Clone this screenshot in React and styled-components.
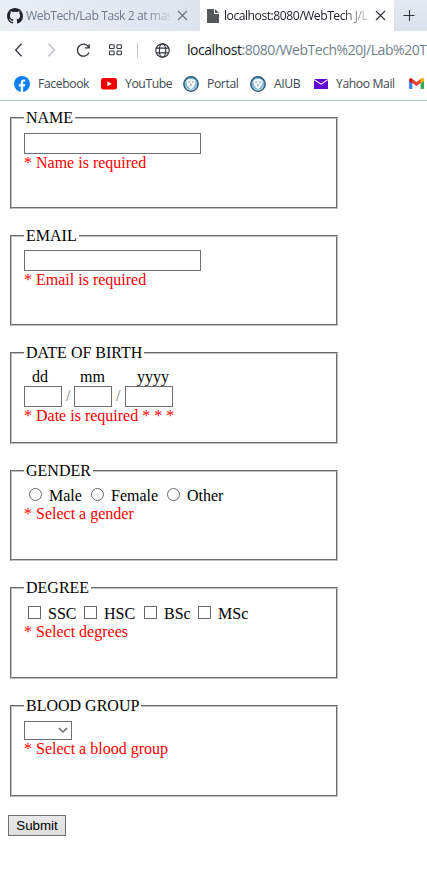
import React from "react";
import styled, { createGlobalStyle } from "styled-components";

const GlobalStyle = createGlobalStyle`
  * { box-sizing: border-box; }
  html, body { margin: 0; background: #fff; overflow: hidden; }
`;

const Window = styled.div`
  width: 427px;
  height: 883px;
  overflow: hidden;
  background: #fff;
  font-family: "Open Sans", "Noto Sans", sans-serif;
`;

const TabStrip = styled.div`
  display: flex;
  height: 31px;
  background: linear-gradient(#e3eaf3, #d9e1eb);
`;

const Tab = styled.div`
  display: flex;
  align-items: center;
  flex: none;
  width: ${(p) => p.$width}px;
  height: 31px;
  padding-left: 7px;
  background: ${(p) => (p.$active ? "#fff" : "linear-gradient(90deg, #e9eef5, #dce4ee)")};
  color: ${(p) => (p.$active ? "#20242c" : "#6c7b8d")};
  svg { flex: none; }
`;

const TabTitle = styled.div`
  width: ${(p) => p.$width}px;
  margin-left: ${(p) => p.$gap}px;
  margin-right: 7px;
  white-space: nowrap;
  font-size: 12.2px;
  line-height: 20px;
  letter-spacing: ${(p) => p.$spacing}px;
  mask-image: linear-gradient(90deg, #000 82%, transparent 104%);
`;

const NewTab = styled.div`
  display: flex;
  align-items: center;
  padding: 0 0 1px 9px;
`;

const AddressBar = styled.div`
  display: flex;
  align-items: center;
  height: 38px;
  padding-left: 12px;
  svg { flex: none; }
`;

const Divider = styled.div`
  flex: none;
  width: 1px;
  height: 15px;
  margin: 0 17px 0 15px;
  background: #c4c9cf;
`;

const Url = styled.div`
  margin-left: 17px;
  white-space: nowrap;
  font-size: 14px;
  line-height: 22px;
  letter-spacing: -0.46px;
  color: #74808e;
  span { color: #15181d; }
`;

const Bookmarks = styled.div`
  display: flex;
  align-items: center;
  height: 32px;
  border-bottom: 1px solid #b1bfcb;
  padding: 0 0 2px 14px;
`;

const Bookmark = styled.div`
  display: flex;
  align-items: center;
  flex: none;
  width: ${(p) => p.$width}px;
  white-space: nowrap;
  font-size: 12.2px;
  line-height: 20px;
  letter-spacing: -0.4px;
  color: #414852;
  svg { flex: none; margin-right: 8px; }
`;

const Form = styled.form`
  display: flex;
  flex-direction: column;
  align-items: flex-start;
  padding: 8px 0 0 8px;
  font: 16px/18px "Liberation Serif", "Times New Roman", serif;
  color: #000;
`;

const Group = styled.fieldset`
  width: 328px;
  height: ${(p) => p.$height}px;
  margin: 0 0 18px 2px;
  padding: 0 12px;
  border: 2px groove #c0c0c0;
`;

const Legend = styled.legend`
  height: 18px;
  padding: 0 2px;
  white-space: nowrap;
`;

const Row = styled.div`
  display: flex;
  align-items: flex-end;
  height: ${(p) => p.$height}px;
`;

const TextInput = styled.input`
  width: ${(p) => p.$width}px;
  height: 21px;
  margin: 0;
  padding: 1px 2px;
  border: 1px solid #6f6f6f;
  border-radius: 0;
  background: #fff;
`;

const ErrorText = styled.div`
  white-space: nowrap;
  color: #ff0000;
`;

const DateLabels = styled.div`
  display: grid;
  grid-template-columns: 48px 57px 48px;
  height: 18px;
  margin: 6px 0 0 8px;
`;

const Slash = styled.span`
  width: ${(p) => p.$width}px;
  height: 21px;
  padding: 1px 0 0 4px;
  color: #777;
`;

const Option = styled.label`
  display: flex;
  flex: none;
  align-items: flex-start;
  width: ${(p) => p.$width}px;
  height: 18px;
  white-space: nowrap;
`;

const Mark = styled.input`
  appearance: none;
  flex: none;
  width: 13px;
  height: 13px;
  margin: 1px 7px 0 0;
  border: 1px solid #6a6a6a;
  border-radius: ${(p) => (p.type === "radio" ? "50%" : "0")};
  background: #fff;
`;

const Options = styled(Row)`
  padding-left: ${(p) => p.$indent}px;
`;

const SelectBox = styled.div`
  display: flex;
  align-items: center;
  justify-content: flex-end;
  width: 48px;
  height: 19px;
  padding-right: 3px;
  border: 1px solid #6f6f6f;
`;

const Submit = styled.button`
  width: 58px;
  height: 21px;
  margin: 0;
  padding: 0;
  border: 1px solid #707070;
  border-radius: 0;
  background: linear-gradient(#e9e9e9, #dedede);
  color: #000;
  font: 13.33px/17px "Liberation Sans", Arial, sans-serif;
`;

const GithubIcon = () => (
  <svg width="16" height="16" viewBox="0 0 16 16">
    <path fill="#1f2630" d="M8 0C3.58 0 0 3.58 0 8c0 3.54 2.29 6.53 5.47 7.59.4.07.55-.17.55-.38 0-.19-.01-.82-.01-1.49-2.01.37-2.53-.49-2.69-.94-.09-.23-.48-.94-.82-1.13-.28-.15-.68-.52-.01-.53.63-.01 1.08.58 1.23.82.72 1.21 1.87.87 2.33.66.07-.52.28-.87.51-1.07-1.78-.2-3.64-.89-3.64-3.95 0-.87.31-1.59.82-2.15-.08-.2-.36-1.02.08-2.12 0 0 .67-.21 2.2.82a7.6 7.6 0 0 1 4 0c1.53-1.04 2.2-.82 2.2-.82.44 1.1.16 1.92.08 2.12.51.56.82 1.27.82 2.15 0 3.07-1.87 3.75-3.65 3.95.29.25.54.73.54 1.48 0 1.07-.01 1.93-.01 2.2 0 .21.15.46.55.38A8.01 8.01 0 0 0 16 8c0-4.42-3.58-8-8-8Z" />
  </svg>
);
const CloseIcon = ({ color }) => (
  <svg width="11" height="11" viewBox="0 0 11 11" fill="none" stroke={color} strokeWidth="1.15">
    <path d="M1 1l9 9M10 1l-9 9" />
  </svg>
);
const FileIcon = () => (
  <svg width="12" height="14" viewBox="0 0 12 14">
    <path fill="#55585c" d="M0 0h7v5h5v9H0zM8 0l4 4H8z" />
  </svg>
);
const PlusIcon = () => (
  <svg width="12" height="12" viewBox="0 0 12 12" stroke="#30353b" strokeWidth="1.1">
    <path d="M.5 6.5h11M6.5 1v11" />
  </svg>
);
const NavIcons = () => (
  <svg width="110" height="18" viewBox="0 0 110 18" fill="none" stroke="#30353b" strokeWidth="1.3">
    <path d="M9.5 2.8 3.7 9l5.8 6.2" />
    <path stroke="#b9bec5" d="m36.5 2.8 5.8 6.2-5.8 6.2" />
    <path d="M76.6 6.1A6 6 0 1 0 77 11.4M77.2 3.3v3.5h-4.3" />
    <g strokeWidth="1.1">
      <rect x="97.5" y="3.7" width="4.6" height="3.8" rx=".7" />
      <rect x="105" y="3.7" width="4.4" height="3.8" rx=".7" />
      <rect x="97.5" y="10" width="4.6" height="3.8" rx=".7" />
      <rect x="105" y="10" width="4.4" height="3.8" rx=".7" />
    </g>
  </svg>
);
const GlobeIcon = () => (
  <svg width="15" height="15" viewBox="0 0 15 15" fill="none" stroke="#30353b" strokeWidth="1.15">
    <circle cx="7.5" cy="7.5" r="6.7" />
    <ellipse cx="7.5" cy="7.5" rx="3.2" ry="6.7" />
    <path d="M1.4 5.1h12.2M1.4 9.9h12.2" />
  </svg>
);
const FacebookIcon = () => (
  <svg width="16" height="16" viewBox="0 0 16 16">
    <circle cx="8" cy="8" r="8" fill="#0b80f5" />
    <path fill="#fff" d="M6.8 16v-5.4H4.9V8.2h1.9V6.5c0-2.1 1.2-3.1 3-3.1.7 0 1.4.1 1.4.1v1.9h-1c-.9 0-1.1.6-1.1 1.1v1.7h2.1l-.4 2.4H9.1V16z" />
  </svg>
);
const YoutubeIcon = () => (
  <svg width="16" height="12" viewBox="0 0 16 12">
    <rect width="16" height="11.5" rx="2.3" fill="#f00000" />
    <path fill="#fff" d="M6.3 3.3v5l4.4-2.5z" />
  </svg>
);
const SealIcon = () => (
  <svg width="16" height="16" viewBox="0 0 16 16">
    <circle cx="8" cy="8" r="7.2" fill="#83b7d6" stroke="#275776" strokeWidth="1.4" />
    <path fill="#f2f5f2" d="M3.6 4.2c2.7-1.7 6.1-1.7 8.8 0 .6 4-.9 7-4.4 9-3.5-2-5-5-4.4-9Z" />
    <path stroke="#55879f" strokeWidth="1" fill="none" d="M5.4 6h1.3M9.3 6h1.3M8 8v1.8" />
    <path stroke="#d9eaf2" strokeWidth=".8" fill="none" d="M2.5 10.5A6 6 0 0 0 13.5 10.5" />
  </svg>
);
const MailIcon = () => (
  <svg width="14" height="10" viewBox="0 0 14 10">
    <path fill="#6001d2" d="M0 0h14v10H0z" />
    <path fill="#fff" d="M0 0 7 4.6 14 0v1.2L7 5.7 0 1.2z" />
  </svg>
);
const GmailIcon = () => (
  <svg width="15" height="11" viewBox="0 0 15 11">
    <path fill="#4285f4" d="M0 2h3.4v9H1a1 1 0 0 1-1-1z" />
    <path fill="#34a853" d="M11.6 2H15v8a1 1 0 0 1-1 1h-2.4z" />
    <path fill="#ea4335" d="M0 2C0 .2 2 0 3 .8l4.5 3.3L12 .8C13 0 15 .2 15 2L11.6 5 7.5 8 3.4 5z" />
    <path fill="#fbbc04" d="M11.6 1.1C13.2-.2 15 .4 15 2v1l-3.4 2.5z" />
    <path fill="#c5221f" d="M0 2C0 .4 1.8-.2 3.4 1.1v4.4L0 3z" />
  </svg>
);
const ChevronIcon = () => (
  <svg width="10" height="7" viewBox="0 0 10 7" fill="none" stroke="#707070" strokeWidth="1.6">
    <path d="M1 1.2 5 5l4-3.8" />
  </svg>
);

const genders = [["Male", 62], ["Female", 76], ["Other", 70]];
const degrees = [["SSC", 56], ["HSC", 60], ["BSc", 54], ["MSc", 60]];

export default function App() {
  return (
    <Window>
      <GlobalStyle />
      <TabStrip>
        <Tab $width={200}>
          <GithubIcon />
          <TabTitle $width={144} $gap={3} $spacing={-0.46}>WebTech/Lab Task 2 at mas</TabTitle>
          <CloseIcon color="#69727d" />
        </Tab>
        <Tab $width={194} $active>
          <FileIcon />
          <TabTitle $width={144} $gap={5} $spacing={-0.5}>localhost:8080/WebTech J/L</TabTitle>
          <CloseIcon color="#30353b" />
        </Tab>
        <NewTab><PlusIcon /></NewTab>
      </TabStrip>
      <AddressBar>
        <NavIcons />
        <Divider />
        <GlobeIcon />
        <Url><span>localhost</span>:8080/WebTech%20J/Lab%20T</Url>
      </AddressBar>
      <Bookmarks>
        <Bookmark $width={87}><FacebookIcon />Facebook</Bookmark>
        <Bookmark $width={82}><YoutubeIcon />YouTube</Bookmark>
        <Bookmark $width={67}><SealIcon />Portal</Bookmark>
        <Bookmark $width={64}><SealIcon />AIUB</Bookmark>
        <Bookmark $width={95}><MailIcon />Yahoo Mail</Bookmark>
        <Bookmark $width={30}><GmailIcon /></Bookmark>
      </Bookmarks>
      <Form>
        <Group $height={100}>
          <Legend>NAME</Legend>
          <Row $height={27}><TextInput $width={177} /></Row>
          <ErrorText>* Name is required</ErrorText>
        </Group>
        <Group $height={99}>
          <Legend>EMAIL</Legend>
          <Row $height={26}><TextInput $width={177} /></Row>
          <ErrorText>* Email is required</ErrorText>
        </Group>
        <Group $height={100}>
          <Legend>DATE OF BIRTH</Legend>
          <DateLabels><span>dd</span><span>mm</span><span>yyyy</span></DateLabels>
          <Row $height={21}>
            <TextInput $width={38} />
            <Slash $width={12}>/</Slash>
            <TextInput $width={38} />
            <Slash $width={13}>/</Slash>
            <TextInput $width={48} />
          </Row>
          <ErrorText>* Date is required * * *</ErrorText>
        </Group>
        <Group $height={99}>
          <Legend>GENDER</Legend>
          <Options $height={25} $indent={5}>
            {genders.map(([name, width]) => (
              <Option key={name} $width={width}><Mark type="radio" name="gender" />{name}</Option>
            ))}
          </Options>
          <ErrorText>* Select a gender</ErrorText>
        </Group>
        <Group $height={100}>
          <Legend>DEGREE</Legend>
          <Options $height={26} $indent={4}>
            {degrees.map(([name, width]) => (
              <Option key={name} $width={width}><Mark type="checkbox" />{name}</Option>
            ))}
          </Options>
          <ErrorText>* Select degrees</ErrorText>
        </Group>
        <Group $height={100}>
          <Legend>BLOOD GROUP</Legend>
          <Row $height={25}><SelectBox><ChevronIcon /></SelectBox></Row>
          <ErrorText>* Select a blood group</ErrorText>
        </Group>
        <Submit type="button">Submit</Submit>
      </Form>
    </Window>
  );
}
